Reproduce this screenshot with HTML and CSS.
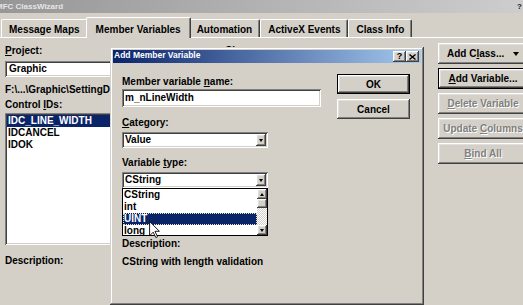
FILE: index.html
```html
<!DOCTYPE html>
<html lang="en">
  <head>
    <meta charset="UTF-8" />
    <title>MFC ClassWizard</title>
    <link rel="stylesheet" href="styles.css">
  </head>
  <body>
    <div class="window">
      <div class="titlebar">
        <span class="title">MFC ClassWizard</span>
        <span class="help">?</span>
      </div>
      <div class="tabs">
        <div class="tab">Message Maps</div>
        <div class="tab active">Member Variables</div>
        <div class="tab">Automation</div>
        <div class="tab">ActiveX Events</div>
        <div class="tab">Class Info</div>
      </div>
      <div class="panel">
        <div class="col-left">
          <div class="label"><u>P</u>roject:</div>
          <div class="field">Graphic</div>
          <div class="path">F:\...\Graphic\SettingDlg.h</div>
          <div class="label ids">Control <u>I</u>Ds:</div>
          <ul class="listbox">
            <li class="sel">IDC_LINE_WIDTH</li>
            <li>IDCANCEL</li>
            <li>IDOK</li>
          </ul>
          <div class="label desc">Description:</div>
        </div>
        <div class="col-mid">
          <div class="label">Class <u>n</u>ame:</div>
        </div>
        <div class="col-right">
          <div class="btn split"><span>Add C<u>l</u>ass...</span><span class="arrow"></span></div>
          <div class="btn default"><span><u>A</u>dd Variable...</span></div>
          <div class="btn disabled"><span><u>D</u>elete Variable</span></div>
          <div class="btn disabled"><span>Update <u>C</u>olumns</span></div>
          <div class="btn disabled"><span><u>B</u>ind All</span></div>
        </div>
      </div>

      <div class="dialog">
        <div class="dlg-title">
          <span>Add Member Variable</span>
          <div class="caption-btns">
            <span class="cap-btn">?</span>
            <span class="cap-btn">
              <svg width="7" height="6" viewBox="0 0 7 6"><path d="M0.5 0.5 L6.5 5.5 M6.5 0.5 L0.5 5.5" stroke="#000" stroke-width="1.4"/></svg>
            </span>
          </div>
        </div>
        <div class="dlg-body">
          <div class="form">
            <div class="label">Member variable <u>n</u>ame:</div>
            <div class="edit">m_nLineWidth</div>
            <div class="label cat"><u>C</u>ategory:</div>
            <div class="combo">
              <span class="value">Value</span>
              <span class="drop"><span class="arrow small"></span></span>
            </div>
            <div class="label type">Variable <u>t</u>ype:</div>
            <div class="combo open">
              <span class="value">CString</span>
              <span class="drop"><span class="arrow small"></span></span>
              <div class="droplist">
                <ul>
                  <li>CString</li>
                  <li>int</li>
                  <li class="sel">UINT</li>
                  <li>long</li>
                </ul>
                <div class="scroll">
                  <span class="sb-btn"><span class="arrow up"></span></span>
                  <span class="sb-thumb"></span>
                  <span class="sb-track"></span>
                  <span class="sb-btn"><span class="arrow small"></span></span>
                </div>
              </div>
            </div>
            <div class="label desc2">Description:</div>
            <div class="desc-text">CString with length validation</div>
          </div>
          <div class="dlg-buttons">
            <div class="btn default">OK</div>
            <div class="btn">Cancel</div>
          </div>
        </div>
      </div>

      <svg class="cursor" width="11" height="17" viewBox="0 0 12 19">
        <path d="M0.5 0.5 L0.5 16.5 L4.5 12.5 L7.5 18.5 L9.5 17.5 L6.5 11.5 L11.5 11.5 Z" fill="#fff" stroke="#000" stroke-width="1"/>
      </svg>
    </div>
  </body>
</html>
```

FILE: styles.css
```css
* {
  margin: 0;
  padding: 0;
  box-sizing: border-box;
}
ul {
  list-style: none;
}
body {
  width: 523px;
  height: 305px;
  overflow: hidden;
  background: #d4d0c8;
  color: #000;
  font: bold 10px/13px "Liberation Sans", Arial, sans-serif;
}
u {
  text-underline-offset: 1px;
}
.window {
  position: relative;
  height: 305px;
}

/* main window caption */
.titlebar {
  height: 13px;
  display: flex;
  justify-content: space-between;
  background: linear-gradient(to right, #979797, #cdcdcd);
  color: #e6e6e6;
  font-size: 8px;
  line-height: 13px;
}
.titlebar .title {
  margin-left: -4px;
}
.titlebar .help {
  color: #202020;
  width: 6px;
}

/* tabs */
.tabs {
  display: flex;
  align-items: flex-end;
  height: 20px;
  margin-top: 4px;
  padding-left: 1px;
}
.tab {
  height: 18px;
  padding: 3px 7px 0;
  border: 1px solid;
  border-color: #fff #404040 transparent #fff;
  border-bottom: 0;
  border-radius: 2px 2px 0 0;
  box-shadow: inset -1px 0 #808080;
  white-space: nowrap;
}
.tab.active {
  height: 21px;
  margin: 0 -2px -1px;
  padding: 5px 9px 0;
  position: relative;
  z-index: 1;
  background: #d4d0c8;
}

.panel {
  display: flex;
  height: 268px;
  padding-left: 5px;
  border-top: 1px solid #fff;
}
.col-left {
  width: 215px;
  padding-top: 6px;
}
.col-mid {
  flex: 1;
  padding: 6px 0 0 5px;
}
.col-right {
  width: 90px;
  margin-right: -5px;
  padding-top: 5px;
  display: flex;
  flex-direction: column;
  gap: 4px;
}

.field,
.edit,
.listbox,
.combo {
  background: #fff;
  box-shadow: inset 1px 1px #808080, inset -1px -1px #fff,
    inset 2px 2px #404040, inset -2px -2px #d4d0c8;
}
.field {
  height: 16px;
  margin-top: 4px;
  padding: 2px 4px;
  line-height: 12px;
}
.path {
  margin-top: 6px;
  white-space: nowrap;
  overflow: hidden;
}
.label.ids {
  margin-top: 2px;
}
.listbox {
  height: 132px;
  margin-top: 2px;
  padding: 2px;
}
.listbox li {
  line-height: 12px;
  padding-left: 1px;
}
.listbox li.sel,
.droplist li.sel {
  background: #0a246a;
  color: #fff;
}
.label.desc {
  margin-top: 9px;
}

/* buttons */
.btn,
.cap-btn,
.drop,
.sb-btn,
.sb-thumb {
  background: #d4d0c8;
  box-shadow: inset -1px -1px #404040, inset 1px 1px #fff,
    inset -2px -2px #808080, inset 2px 2px #dfdfdf;
}
.btn {
  height: 21px;
  display: flex;
  align-items: center;
  justify-content: center;
  white-space: nowrap;
}
.btn.default {
  border: 1px solid #000;
}
.btn.disabled {
  color: #808080;
  text-shadow: 1px 1px 0 #fff;
}
.btn.split {
  justify-content: space-between;
  padding: 0 9px;
}
.arrow {
  width: 0;
  height: 0;
  border-left: 3px solid transparent;
  border-right: 3px solid transparent;
  border-top: 4px solid #000;
}
.arrow.small {
  border-left-width: 2.5px;
  border-right-width: 2.5px;
  border-top-width: 3px;
}
.arrow.up {
  border-left: 2.5px solid transparent;
  border-right: 2.5px solid transparent;
  border-top: 0;
  border-bottom: 3px solid #000;
}

/* dialog */
.dialog {
  position: absolute;
  left: 110px;
  top: 47px;
  width: 314px;
  height: 258px;
  padding: 3px;
  background: #d4d0c8;
  box-shadow: inset -1px -1px #404040, inset 1px 1px #d4d0c8,
    inset -2px -2px #808080, inset 2px 2px #fff;
  z-index: 2;
}
.dlg-title {
  height: 13px;
  display: flex;
  justify-content: space-between;
  padding-left: 1px;
  background: linear-gradient(to right, #0a246a, #a6caf0);
  color: #fff;
  font-size: 8.5px;
  line-height: 11px;
}
.caption-btns {
  display: flex;
  margin: 1px 2px 0 0;
}
.cap-btn {
  width: 13px;
  height: 11px;
  display: flex;
  align-items: center;
  justify-content: center;
  color: #000;
  font-size: 9px;
}
.dlg-body {
  display: flex;
  gap: 16px;
  padding: 11px 0 0 9px;
}
.form {
  width: 199px;
  padding-top: 1px;
}
.edit {
  height: 18px;
  margin-top: 1px;
  padding: 2px 3px;
}
.label.cat {
  margin-top: 9px;
}
.label.type {
  margin-top: 8px;
}
.combo {
  position: relative;
  display: flex;
  width: 146px;
  height: 16px;
  margin-top: 3px;
  padding: 2px;
}
.combo .value {
  flex: 1;
  line-height: 12px;
  padding-left: 1px;
}
.drop {
  width: 10px;
  height: 12px;
  display: flex;
  align-items: center;
  justify-content: center;
}
.droplist {
  position: absolute;
  top: 100%;
  left: 0;
  width: 146px;
  height: 48px;
  display: flex;
  border: 1px solid #000;
  background: #fff;
  overflow: hidden;
}
.droplist ul {
  flex: 1;
}
.droplist li {
  line-height: 12px;
  padding-left: 1px;
}
.droplist li.sel {
  outline: 1px dotted #e8e8c0;
  outline-offset: -1px;
}
.scroll {
  width: 10px;
  display: flex;
  flex-direction: column;
}
.sb-btn {
  height: 10px;
  display: flex;
  align-items: center;
  justify-content: center;
}
.sb-thumb {
  height: 9px;
}
.sb-track {
  flex: 1;
  background: repeating-conic-gradient(#fff 0 25%, #d4d0c8 0 50%) 0 0 / 2px 2px;
}
.label.desc2 {
  margin-top: 49px;
}
.desc-text {
  margin-top: 5px;
}
.dlg-buttons {
  width: 73px;
  display: flex;
  flex-direction: column;
  gap: 5px;
}
.dlg-buttons .btn {
  height: 20px;
}

.cursor {
  position: absolute;
  left: 149px;
  top: 221px;
  z-index: 3;
}
```
